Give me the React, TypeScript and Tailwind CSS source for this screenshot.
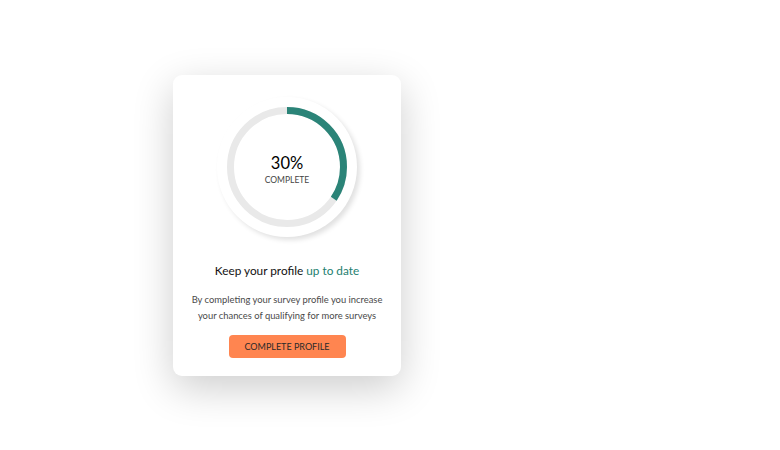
import React from "react";

export default function App() {
  const r = 56.5;
  const c = 2 * Math.PI * r;
  const frac = 124 / 360;
  return (
    <div className="w-[780px] h-[450px] bg-white pl-[173px] pt-[75px]" style={{ fontFamily: "Lato, 'Open Sans', sans-serif" }}>
      <div className="w-[228px] h-[301px] bg-white rounded-[9px] shadow-[0_12px_40px_rgba(0,0,0,0.2)] flex flex-col items-center pt-[22px]">
        <div className="relative w-[140px] h-[140px] rounded-full bg-white shadow-[3px_3px_5px_rgba(0,0,0,0.12)] flex items-center justify-center">
          <svg width="140" height="140" viewBox="0 0 140 140" className="absolute left-0 top-0">
            <circle cx="70" cy="70" r={r} fill="none" stroke="#e9e9e9" strokeWidth="7" />
            <circle
              cx="70"
              cy="70"
              r={r}
              fill="none"
              stroke="#2b8478"
              strokeWidth="7"
              strokeDasharray={`${c * frac} ${c}`}
              transform="rotate(-90 70 70)"
            />
          </svg>
          <div className="relative flex flex-col items-center mt-[4px]">
            <div className="text-[16.5px] leading-[20px] text-black">30%</div>
            <div className="text-[8.5px] leading-[12px] text-[#444] mt-[1px]">COMPLETE</div>
          </div>
        </div>
        <div className="mt-[26px] text-[11.8px] leading-[16px] text-[#111]">
          Keep your profile <span className="text-[#23806f]">up to date</span>
        </div>
        <div className="mt-[13px] text-[9.4px] leading-[16px] text-[#4a4a4a] text-center">
          By completing your survey profile you increase
          <br />
          your chances of qualifying for more surveys
        </div>
        <button className="mt-[11px] w-[117px] h-[23px] rounded-[4px] bg-[#ff8550] text-[9px] text-[#2a2a2a] flex items-center justify-center">
          COMPLETE PROFILE
        </button>
      </div>
    </div>
  );
}
